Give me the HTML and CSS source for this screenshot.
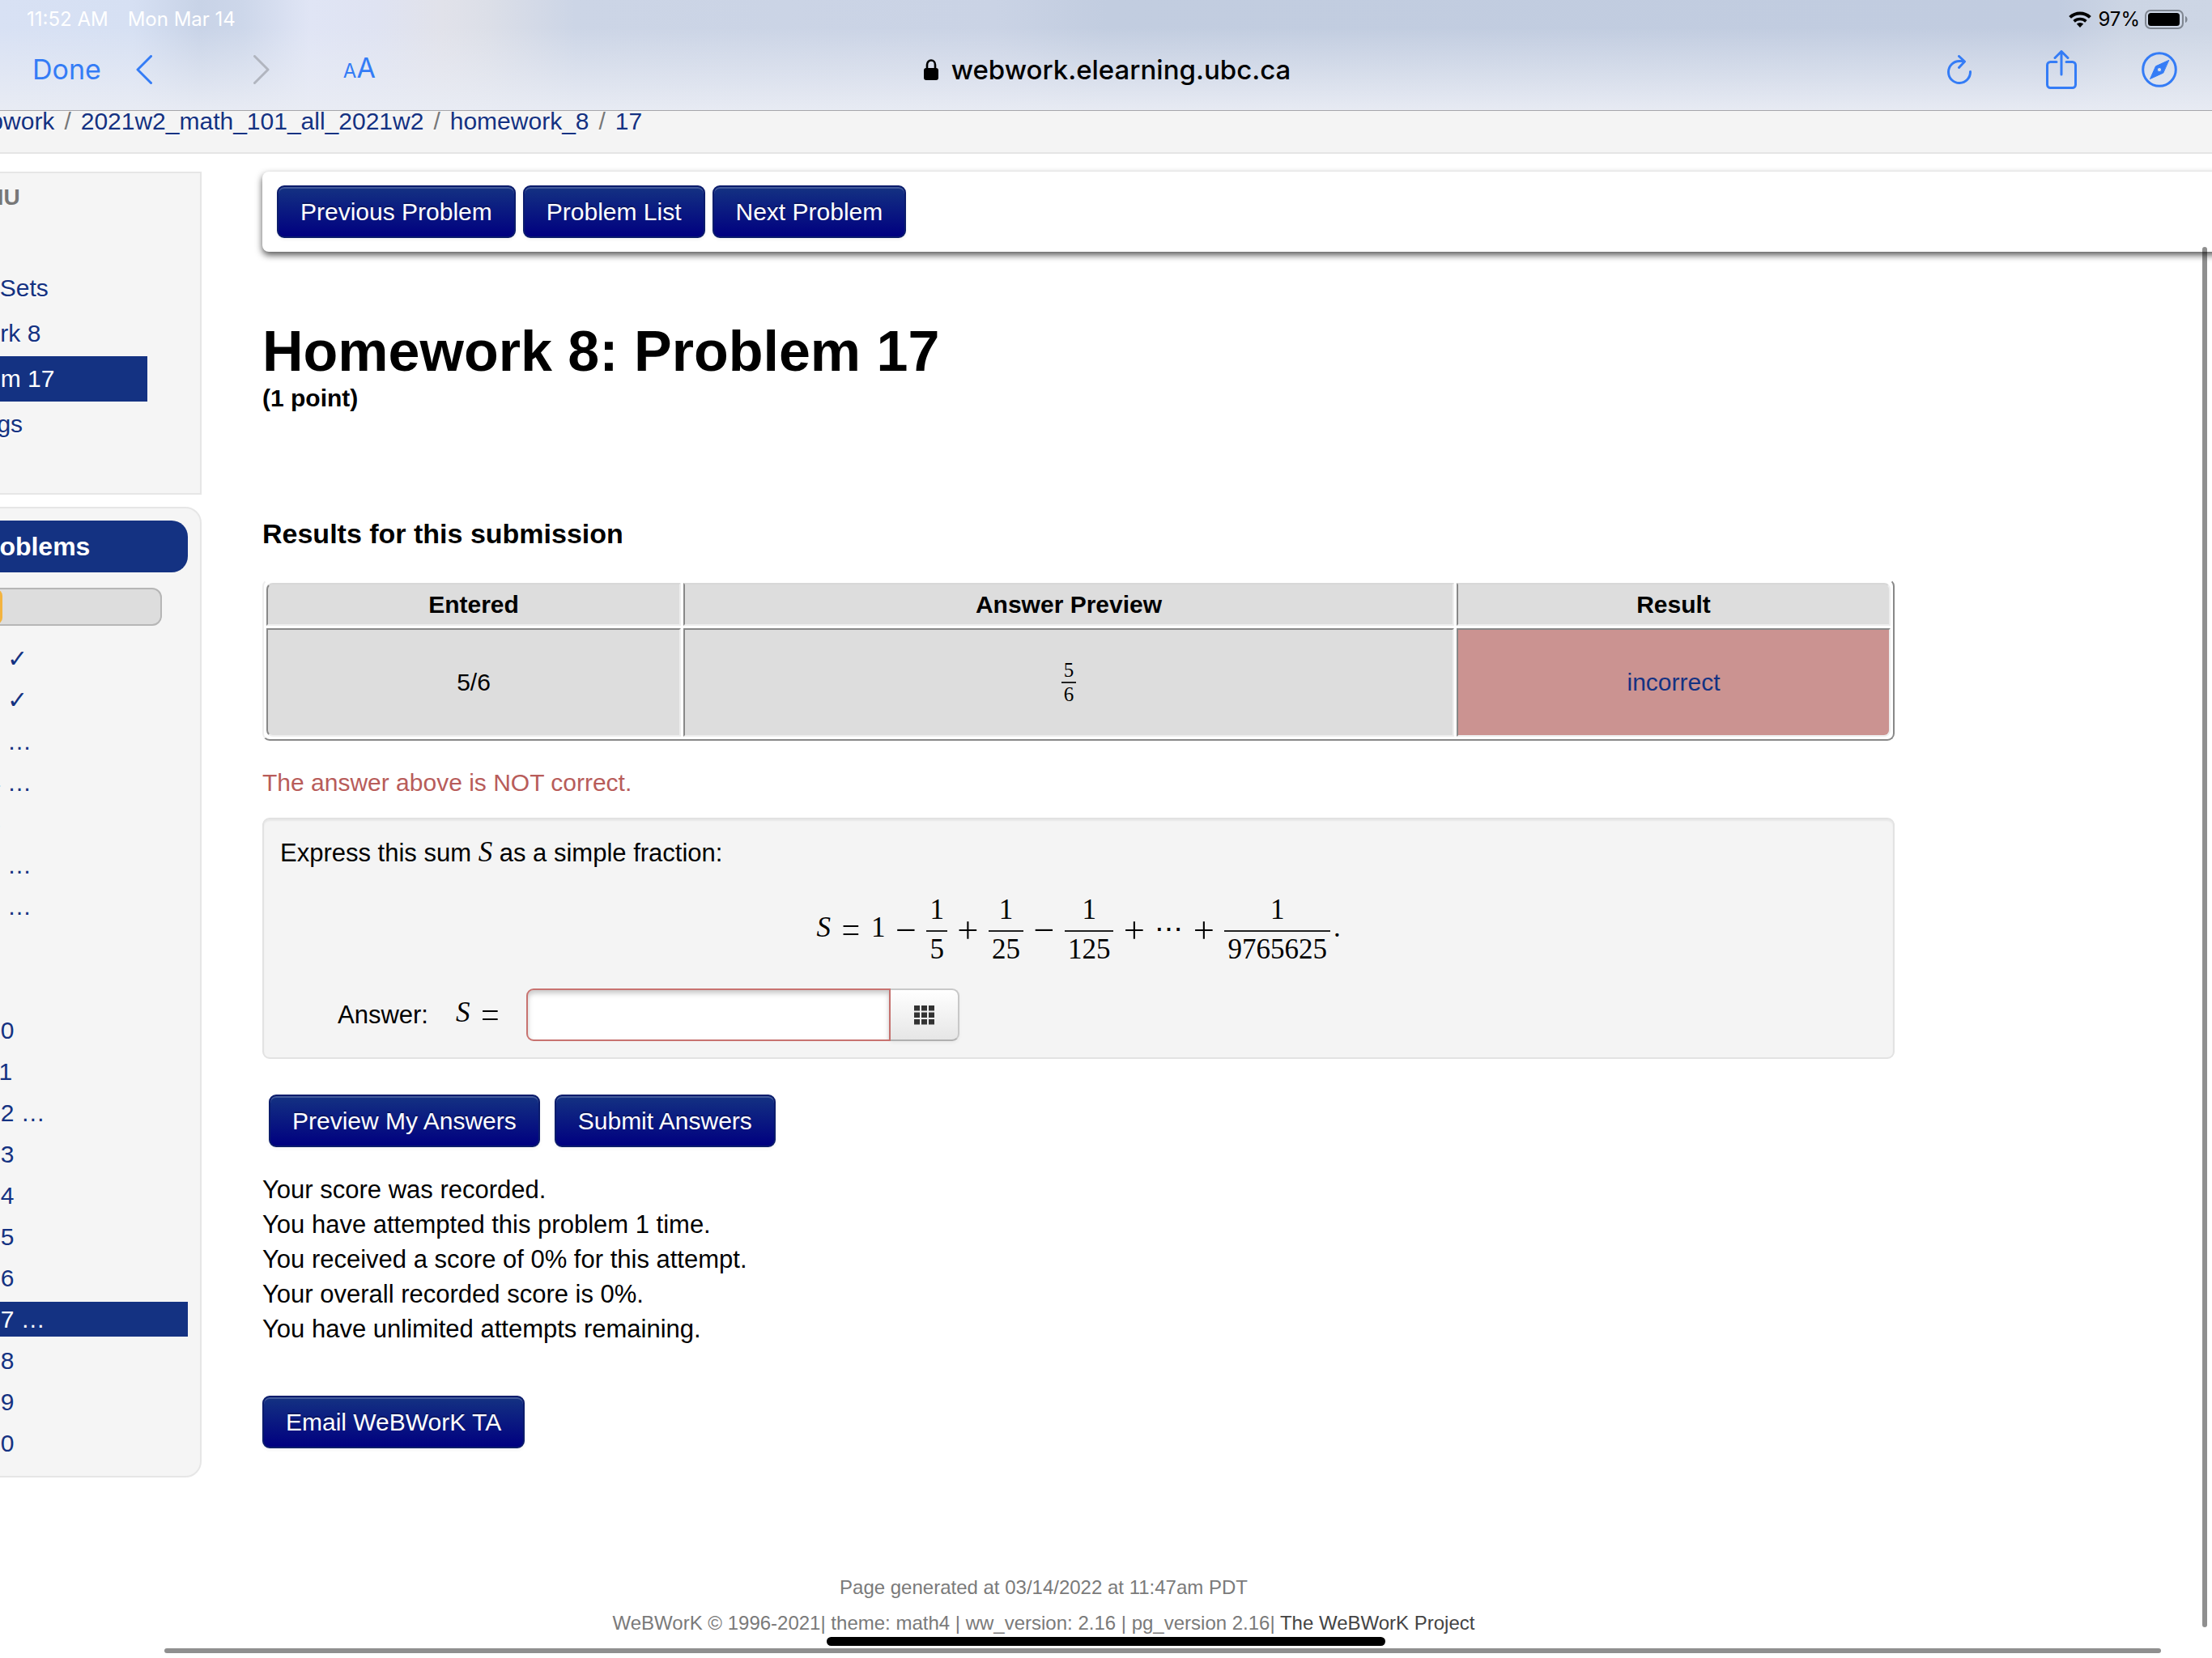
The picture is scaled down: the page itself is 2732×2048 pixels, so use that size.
FILE: index.html
```html
<!DOCTYPE html>
<html lang="en">
<head>
<meta charset="utf-8">
<meta name="viewport" content="width=device-width, initial-scale=1">
<title>Homework 8: Problem 17</title>
<link rel="stylesheet" href="styles.css">
</head>
<body>
<header class="browser">
  <div class="status">
    <span class="status-time">11:52 AM</span>
    <span class="status-date">Mon Mar 14</span>
    <svg class="wifi" viewBox="0 0 28 20" aria-hidden="true"><path d="M1.6 7.4a18 18 0 0 1 24.8 0" fill="none" stroke="#000" stroke-width="4"/><path d="M6.6 12.4a11 11 0 0 1 14.8 0" fill="none" stroke="#000" stroke-width="3.6"/><path d="M14 20l-4.2-4.4a6 6 0 0 1 8.4 0z"/></svg>
    <span class="status-charge">97%</span>
    <svg class="battery" viewBox="0 0 54 24" aria-hidden="true"><rect x="1" y="1" width="46" height="22" rx="6" fill="none" stroke="#7f8691" stroke-width="2"/><rect x="4" y="4" width="39" height="16" rx="3.5"/><path d="M50 8c3.400 1 3.400 7 0 8z" fill="#7f8691"/></svg>
  </div>
  <nav class="toolbar" aria-label="Browser">
    <div class="tools tools-left">
      <button class="tool done">Done</button>
      <button class="tool back" aria-label="Back"><svg viewBox="0 0 20 36"><path d="M18.500 1.500L2 18l16.500 16.500"/></svg></button>
      <button class="tool forward" aria-label="Forward" disabled><svg viewBox="0 0 20 36"><path d="M1.500 1.500L18 18 1.500 34.500"/></svg></button>
      <button class="tool text-size" aria-label="Text size"><span class="small-a">A</span>A</button>
    </div>
    <div class="address">
      <svg viewBox="0 0 18 26" aria-hidden="true"><rect y="11" width="18" height="15" rx="3"/><path d="M4 12V7a5 5.500 0 0 1 10 0v5" fill="none" stroke="#000" stroke-width="2.600"/></svg>
      <span>webwork.elearning.ubc.ca</span>
    </div>
    <div class="tools tools-right">
      <button class="tool" aria-label="Reload"><svg class="reload" viewBox="0 0 30 36"><path d="M28.500 20.500a13.500 13.500 0 1 1-13.500-13h6M14.500 1.500L21.500 8l-7 7.500"/></svg></button>
      <button class="tool" aria-label="Share"><svg class="share" viewBox="0 0 38 48"><path d="M13 14.500H5.500a4 4 0 0 0-4 4v24a4 4 0 0 0 4 4h27a4 4 0 0 0 4-4v-24a4 4 0 0 0-4-4H25M19 30V2M11 9.500L19 1.500l8 8"/></svg></button>
      <button class="tool" aria-label="Open in Safari"><svg class="compass" viewBox="0 0 44 44"><circle cx="22" cy="22" r="20.300"/><path class="needle" fill-rule="evenodd" d="M33.500 10.500L17.500 17.800 10.500 33.500 26.500 26.200zM22 19.400a2.600 2.600 0 1 1 0 5.200 2.600 2.600 0 0 1 0-5.200z"/></svg></button>
    </div>
  </nav>
</header>

<nav class="breadcrumb" aria-label="Breadcrumb">
  <a href="#">webwork</a><span>/</span><a href="#">2021w2_math_101_all_2021w2</a><span>/</span><a href="#">homework_8</a><span>/</span><a href="#">17</a>
</nav>

<div class="page">
  <aside class="sidebar">
    <nav class="panel menu">
      <h2 class="menu-title">MAIN MENU</h2>
      <ul class="menu-list">
        <li><a href="#">Homework Sets</a></li>
        <li><a class="level-2" href="#">Homework 8</a></li>
        <li><a class="level-3 current" href="#">Problem 17</a></li>
        <li><a href="#">User Settings</a></li>
      </ul>
    </nav>
    <nav class="panel problems">
      <h2 class="problems-title">Problems</h2>
      <div class="progress"><div class="progress-fill" style="width: 39%"></div></div>
      <ol class="problem-list">
        <li><a href="#">Problem 1 ✓</a></li>
        <li><a href="#">Problem 2 ✓</a></li>
        <li><a href="#">Problem 3 …</a></li>
        <li><a href="#">Problem 4 …</a></li>
        <li><a href="#">Problem 5</a></li>
        <li><a href="#">Problem 6 …</a></li>
        <li><a href="#">Problem 7 …</a></li>
        <li><a href="#">Problem 8</a></li>
        <li><a href="#">Problem 9</a></li>
        <li><a href="#">Problem 10</a></li>
        <li><a href="#">Problem 11</a></li>
        <li><a href="#">Problem 12 …</a></li>
        <li><a href="#">Problem 13</a></li>
        <li><a href="#">Problem 14</a></li>
        <li><a href="#">Problem 15</a></li>
        <li><a href="#">Problem 16</a></li>
        <li><a class="current" href="#">Problem 17 …</a></li>
        <li><a href="#">Problem 18</a></li>
        <li><a href="#">Problem 19</a></li>
        <li><a href="#">Problem 20</a></li>
      </ol>
    </nav>
  </aside>

  <main class="content">
    <div class="problem-nav">
      <button class="btn">Previous Problem</button>
      <button class="btn">Problem List</button>
      <button class="btn">Next Problem</button>
    </div>

    <h1>Homework 8: Problem 17</h1>
    <p class="points">(1 point)</p>

    <h2 class="results-title">Results for this submission</h2>
    <table class="results">
      <thead>
        <tr><th class="col-entered">Entered</th><th class="col-preview">Answer Preview</th><th class="col-result">Result</th></tr>
      </thead>
      <tbody>
        <tr>
          <td>5/6</td>
          <td><span class="frac frac-small"><span>5</span><span>6</span></span></td>
          <td class="incorrect"><a href="#">incorrect</a></td>
        </tr>
      </tbody>
    </table>
    <p class="warning">The answer above is NOT correct.</p>

    <form class="problem">
      <section class="well">
        <p class="statement">Express this sum <i class="var">S</i> as a simple fraction:</p>
        <div class="formula">
          <i class="term">S</i><span class="rel">=</span><span class="term">1</span><span class="op">−</span><span class="frac"><span>1</span><span>5</span></span><span class="op">+</span><span class="frac"><span>1</span><span>25</span></span><span class="op">−</span><span class="frac"><span>1</span><span>125</span></span><span class="op">+</span><span class="dots">⋯</span><span class="op">+</span><span class="frac"><span>1</span><span>9765625</span></span><span class="term stop">.</span>
        </div>
        <div class="answer">
          <label for="answer">Answer:</label>
          <span class="answer-lhs"><i class="term">S</i><span class="rel">=</span></span>
          <div class="input-group">
            <input id="answer" type="text">
            <button class="keypad" type="button" aria-label="Equation editor"><svg viewBox="0 0 25 24"><path d="M0 0h7v6.500H0zM9 0h7v6.500H9zM18 0h7v6.500h-7zM0 8.500h7V15H0zM9 8.500h7V15H9zM18 8.500h7V15h-7zM0 17h7v6.500H0zM9 17h7v6.500H9zM18 17h7v6.500h-7z"/></svg></button>
          </div>
        </div>
      </section>
      <div class="actions">
        <button class="btn" type="button">Preview My Answers</button>
        <button class="btn" type="button">Submit Answers</button>
      </div>
    </form>

    <p class="score">Your score was recorded.<br>You have attempted this problem 1 time.<br>You received a score of 0% for this attempt.<br>Your overall recorded score is 0%.<br>You have unlimited attempts remaining.</p>
    <button class="btn">Email WeBWorK TA</button>
  </main>
</div>

<footer class="footer">
  <p>Page generated at 03/14/2022 at 11:47am PDT</p>
  <p>WeBWorK © 1996-2021| theme: math4 | ww_version: 2.16 | pg_version 2.16| <a href="#">The WeBWorK Project</a></p>
</footer>

<div class="home-bar"></div>
<div class="scroll-x"></div>
<div class="scroll-y"></div>
</body>
</html>
```

FILE: styles.css
```css
* {
  box-sizing: border-box;
}

body {
  margin: 0;
  overflow: hidden;
  background: #fff;
  color: #000;
  font: 30px/44px "Liberation Sans", Arial, sans-serif;
}

h1, h2, p, ul, ol {
  margin: 0;
  padding: 0;
}

ul, ol {
  list-style: none;
}

a {
  color: #143282;
  text-decoration: none;
}

button, input {
  font: inherit;
}

/* Browser bar */

.browser {
  position: relative;
  z-index: 1;
  height: 137px;
  border-bottom: 1px solid #a6a6aa;
  background:
    linear-gradient(to bottom, rgba(233, 236, 244, 0) 25%, rgba(233, 236, 244, 0.5) 65%, rgba(233, 236, 244, 0.95)),
    linear-gradient(to right, #d8e1f4, #d6e0f3 6%, #c8d3e7 9%, #cdd7ea 11%, #e0e5f5 14%, #dfe3f2 17%, #e1e2ea 20%, #dcdfe8 22%, #ccd5e6 26%, #cad3e5 45%, #c2cde0 50%, #c1cce0 93%, #ccd5e4 96%, #cdd6e5);
  font-family: Inter, sans-serif;
}

.status {
  display: flex;
  align-items: center;
  height: 48px;
  padding: 0 29px 0 33px;
  font-size: 24px;
}

.status-time,
.status-date {
  color: #fff;
}

.status-date {
  flex: 1;
  margin-left: 24px;
}

.status-charge {
  margin: 0 6px 0 8px;
}

.wifi {
  width: 28px;
  height: 20px;
}

.battery {
  width: 54px;
  height: 24px;
}

.toolbar {
  display: grid;
  grid-template-columns: 1fr auto 1fr;
  align-items: center;
  height: 76px;
  padding: 0 43px 0 40px;
}

.tools {
  display: flex;
  align-items: center;
}

.tools-right {
  justify-content: flex-end;
  gap: 80px;
}

.tool {
  display: flex;
  align-items: baseline;
  padding: 0;
  border: 0;
  background: none;
  color: #347cf6;
  font-size: 34px;
}

.tool svg {
  fill: none;
  stroke: #347cf6;
  stroke-width: 3;
  stroke-linecap: round;
  stroke-linejoin: round;
}

.back {
  margin-left: 43px;
}

.forward {
  margin-left: 125px;
}

.back svg,
.forward svg {
  width: 20px;
  height: 36px;
}

.forward svg {
  stroke: #b1b5bf;
}

.text-size {
  margin-left: 91px;
}

.small-a {
  font-size: 24px;
}

.tool .reload {
  width: 30px;
  height: 36px;
  margin-right: 12px;
}

.tool .share {
  width: 38px;
  height: 48px;
}

.tool .compass {
  width: 44px;
  height: 44px;
}

.tool .needle {
  fill: #347cf6;
  stroke-width: 1;
}

.address {
  display: flex;
  align-items: center;
  gap: 16px;
  padding-left: 6px;
  font-size: 33px;
  font-weight: 500;
}

.address svg {
  width: 18px;
  height: 26px;
}

/* Breadcrumb */

.breadcrumb {
  margin: -4px 0 22px;
  padding: 0 0 21px;
  border-bottom: 2px solid #e5e5e5;
  background: #f4f4f4;
  color: #777;
  line-height: 34px;
  text-shadow: 0 2px 0 #fff;
  white-space: nowrap;
  text-indent: -51px;
}

.breadcrumb span {
  padding: 0 12px;
}

/* The page is wider than the window and scrolled to the right */

.page {
  display: flex;
  align-items: flex-start;
  gap: 75px;
  margin-left: -172px;
}

.sidebar {
  flex: none;
  width: 421px;
}

.panel {
  border: 2px solid #e6e6e6;
  background: #f5f5f5;
}

.menu {
  margin-bottom: 15px;
  padding: 2px 65px 57px 16px;
}

.menu-title {
  padding-left: 17px;
  color: #777;
  font-size: 28px;
  line-height: 56px;
}

.menu-list {
  margin-top: 56px;
}

.menu-list a {
  display: block;
  padding-left: 2px;
  line-height: 56px;
  text-shadow: 0 2px 0 #fff;
}

.menu-list .level-2 {
  padding-left: 36px;
}

.menu-list .level-3 {
  padding-left: 68px;
}

.menu-list .current,
.problem-list .current {
  background: #143282;
  color: #fff;
  text-shadow: none;
}

.problems {
  padding: 15px 15px 19px;
  border-radius: 20px;
}

.problems-title {
  border-radius: 20px;
  background: #143282;
  color: #fff;
  font-size: 32px;
  line-height: 64px;
  text-align: center;
}

.progress {
  height: 47px;
  margin: 19px 32px;
  border: 2px solid #b6b6b6;
  border-radius: 12px;
  background: #ddd;
}

.progress-fill {
  height: 100%;
  border-radius: 8px;
  background: #f3b33f;
}

.problem-list {
  display: grid;
  gap: 8px;
  line-height: 43px;
}

.problem-list a {
  display: block;
  padding-left: 19px;
}

/* Main column */

.content {
  flex: 1;
  padding-right: 392px;
}

.problem-nav {
  display: flex;
  gap: 9px;
  margin-right: -412px;
  padding: 17px 18px;
  border-radius: 8px;
  background: #fff;
  box-shadow: 0 4px 9px #555;
}

.btn {
  height: 65px;
  padding: 0 27px;
  border: 2px solid #0b1c6c;
  border-radius: 9px;
  background: linear-gradient(to bottom, #143282, #000080);
  box-shadow: inset 0 2px 0 rgba(255, 255, 255, 0.2), 0 2px 4px rgba(0, 0, 0, 0.05);
  color: #fff;
  text-shadow: 0 -2px 0 rgba(0, 0, 0, 0.25);
}

h1 {
  margin-top: 85px;
  font-size: 70px;
  line-height: 76px;
}

.points {
  font-weight: bold;
  line-height: 40px;
}

.results-title {
  margin: 125px 0 34px;
  font-size: 34px;
}

.results {
  width: 100%;
  border: 2px solid;
  border-color: #fff #888 #888 #eee;
  border-radius: 9px;
  border-spacing: 3px;
  table-layout: fixed;
  text-align: center;
}

.results th,
.results td {
  padding: 0;
  border: 2px solid;
  border-color: #888 #eee #eee #888;
  background: #ddd;
}

.results th {
  height: 53px;
  border-top-color: #d8d8d8;
}

.results td {
  height: 134px;
}

.results th:first-child {
  border-top-left-radius: 8px;
}

.results th:last-child {
  border-top-right-radius: 8px;
}

.results td:first-child {
  border-bottom-left-radius: 8px;
}

.results td:last-child {
  border-bottom-right-radius: 8px;
}

.results .incorrect {
  background: #cb9391;
}

.col-entered {
  width: 25.6%;
}

.col-preview {
  width: 47.6%;
}

.col-result {
  width: 26.8%;
}

.well,
.score {
  font-size: 31px;
}

.warning {
  margin: 30px 0 21px;
  color: #b85c5a;
}

.well {
  padding: 20px;
  border: 2px solid #e2e2e2;
  border-radius: 9px;
  background: #f4f4f4;
  box-shadow: inset 0 2px 2px rgba(0, 0, 0, 0.05);
}

/* Mathematics */

.var,
.term,
.frac {
  font-family: "Liberation Serif", "Times New Roman", serif;
  font-size: 35px;
}

.var {
  line-height: 40px;
}

.term {
  padding-bottom: 6px;
  line-height: 40px;
}

.frac {
  display: inline-block;
  line-height: 40px;
  text-align: center;
}

.frac span {
  display: block;
  padding: 0 4px;
}

.frac span:first-child {
  padding-bottom: 5px;
}

.frac span:last-child {
  padding-top: 2px;
  border-top: 2px solid #222;
}

.frac.frac-small {
  font-size: 25px;
  line-height: 28px;
  vertical-align: middle;
}

.frac.frac-small span {
  padding: 0 3px;
}

.rel,
.op {
  padding-bottom: 8px;
  font-family: Inter, sans-serif;
  font-size: 50px;
  font-weight: 200;
  line-height: 40px;
  text-align: center;
}

.rel {
  width: 50px;
}

.op {
  width: 51px;
}

.dots {
  padding-bottom: 4px;
  font-family: "DejaVu Serif", serif;
  font-size: 35px;
  line-height: 40px;
}

.formula {
  display: flex;
  align-items: center;
  justify-content: center;
  margin: 28px 0;
}

.stop {
  padding-left: 4px;
}

.answer {
  display: flex;
  align-items: center;
  padding-left: 71px;
}

.answer-lhs {
  display: flex;
  align-items: center;
  margin: 0 20px 0 34px;
}

.input-group {
  display: flex;
}

.input-group input {
  width: 450px;
  height: 65px;
  padding: 0 12px;
  border: 2px solid #c87370;
  border-radius: 9px 0 0 9px;
  background: #fff;
  box-shadow: inset 0 4px 6px rgba(0, 0, 0, 0.22);
}

.keypad {
  display: flex;
  align-items: center;
  justify-content: center;
  width: 85px;
  padding: 0;
  border: 2px solid #c8c8c8;
  border-left: 0;
  border-bottom-color: #b0b0b0;
  border-radius: 0 9px 9px 0;
  background: linear-gradient(to bottom, #fff, #e6e6e6);
  box-shadow: 0 2px 4px rgba(0, 0, 0, 0.05);
}

.keypad svg {
  width: 25px;
  height: 24px;
  fill: #333;
}

.actions {
  display: flex;
  gap: 18px;
  margin: 44px 0 31px;
  padding-left: 8px;
}

.score {
  margin-bottom: 61px;
  line-height: 43px;
}

/* Footer */

.footer {
  margin-top: 114px;
  margin-left: -154px;
  color: #7a7a7a;
  font-size: 24px;
  text-align: center;
}

.footer a {
  color: #444;
}

/* Device overlays */

.home-bar,
.scroll-x,
.scroll-y {
  position: fixed;
  z-index: 2;
}

.home-bar {
  bottom: 15px;
  left: 50%;
  width: 690px;
  height: 11px;
  margin-left: -345px;
  border-radius: 6px;
  background: #000;
}

.scroll-x {
  right: 63px;
  bottom: 6px;
  left: 203px;
  height: 6px;
  border-radius: 3px;
  background: rgba(0, 0, 0, 0.44);
}

.scroll-y {
  top: 305px;
  right: 6px;
  bottom: 38px;
  width: 6px;
  border-radius: 3px;
  background: rgba(0, 0, 0, 0.44);
}
```
